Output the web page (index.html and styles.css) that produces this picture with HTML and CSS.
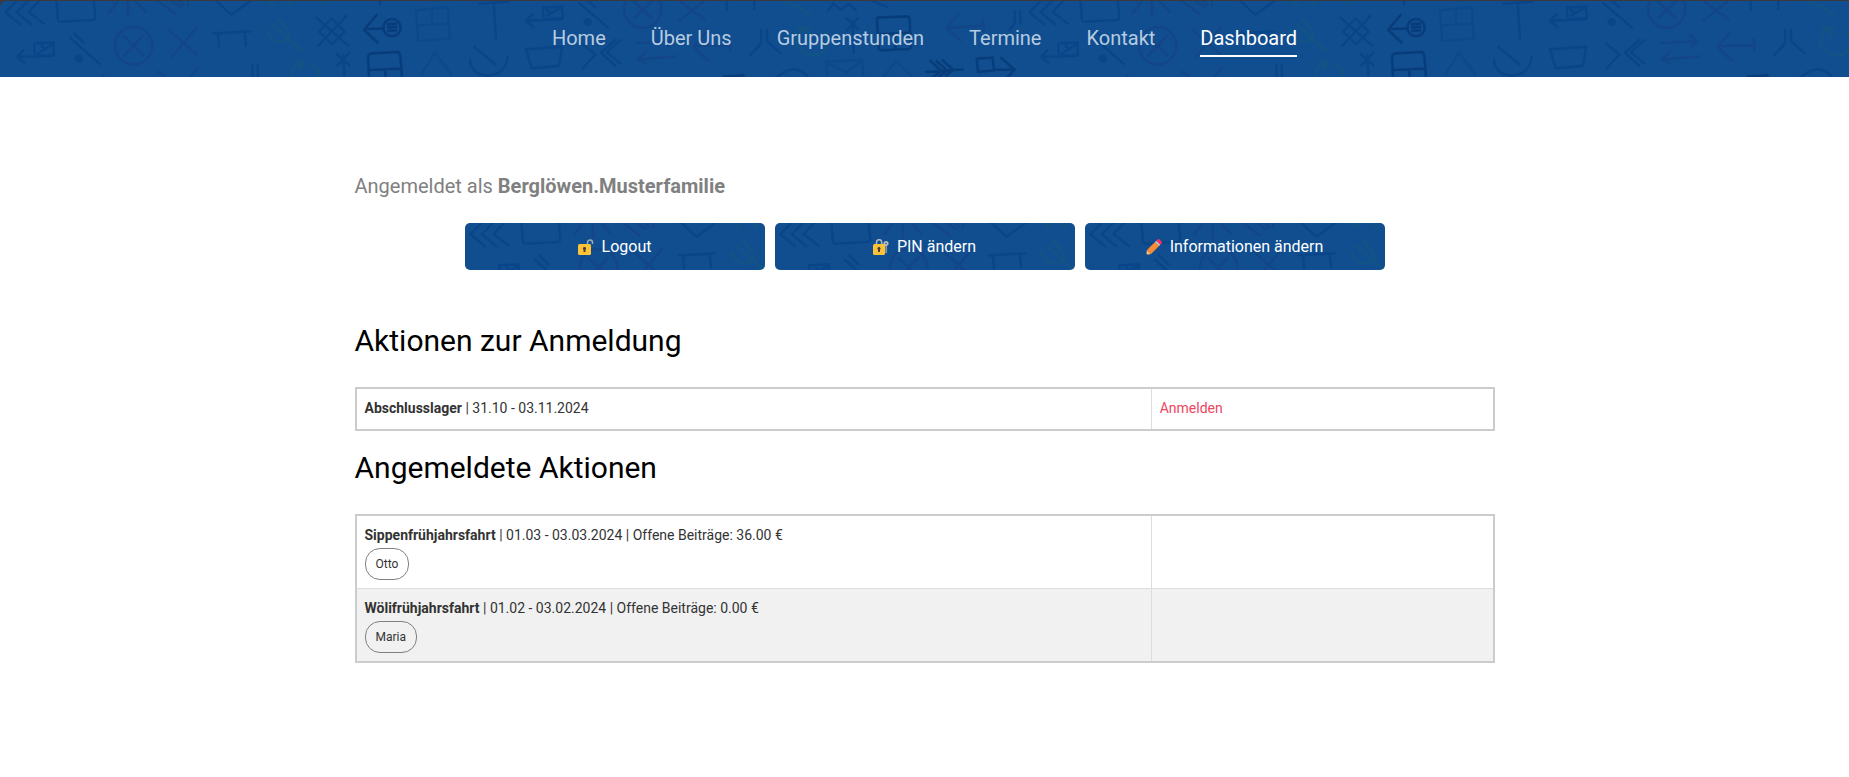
FILE: index.html
```html
<!DOCTYPE html>
<html lang="de">
<head>
<meta charset="utf-8">
<meta name="viewport" content="width=device-width, initial-scale=1">
<title>Dashboard</title>
<link rel="stylesheet" href="styles.css">
</head>
<body>
<div class="top">
<header class="site-header">
  <svg class="pattern" aria-hidden="true">
    <defs>
      <!-- Repeating tile of scout trail signs -->
      <pattern id="signs" width="1024" height="76" patternUnits="userSpaceOnUse" viewBox="0 3 3072 228">
        <g fill="none" stroke="#053f83" stroke-width="8" stroke-linecap="round" stroke-linejoin="round" opacity=".6">
          <path d="M52 0 16 37 60 73M87 0 50 37 94 73M120 0 86 36 131 71"/>
          <path d="M169 0 174 58Q175 65 184 65L278 60Q286 58 286 50L281 0"/>
          <path d="M356 0 328 37M383 0 384 48M404 0 438 35M470 0 524 40M510 0 541 20M536 0 552 15M563 0 565 16" stroke="#134082"/>
          <path d="M646 0 694 44 756 0"/>
          <path d="M158 168 52 170M70 151 52 170 72 188M103 130 161 127 161 165 104 168ZM104 168 161 130M124 138 138 148"/>
          <path d="M210 113 299 192M222 100 250 127"/>
          <circle cx="237" cy="175" r="9" fill="#053f83"/>
          <g stroke="#134082"><circle cx="401" cy="137" r="56"/><path d="M371 109 430 165M429 108 374 165M504 87 591 165M590 83 515 171"/></g>
          <path d="M641 100 751 94M654 101 657 139M734 96 738 137"/>
          <g stroke="#11567c"><path d="M800 91Q820 132 850 124 875 104 862 88L835 57M816 73 905 151M805 0 820 15M860 0 876 16M955 0 970 8"/></g>
          <path d="M995 55 1034 95 997 134 957 94ZM1040 47 955 137M950 54 1045 137"/>
          <g stroke="#03316d"><path d="M1130 45 1092 89 1133 128M1094 87 1150 86"/><circle cx="1176" cy="83" r="26"/><path d="M1163 73 1188 71M1164 82 1189 81M1165 92 1188 91"/><path d="M1107 232 1104 174Q1104 160 1116 160L1190 156Q1200 156 1201 168L1206 232M1106 210 1202 206M1155 210 1157 232"/></g>
          <path d="M1248 30 1343 22 1349 116 1254 123ZM1251 77 1346 70M1295 27 1297 65" opacity=".6"/>
          <path d="M1438 11 1525 5M1481 10 1488 116M1141 0 1141 14"/>
          <path d="M1423 141 1485 193M1410 180C1413 246 1520 240 1522 172"/>
          <path d="M1010 162 1048 196M1048 158 1012 197M1030 166 1033 232"/>
          <path d="M1264 224 1304 157 1354 224" opacity=".6"/>
          <path d="M757 197 758 232M773 197 774 232"/>
          <path d="M310 225 308 232M474 215 493 232M590 207 568 232" stroke="#134082"/>
          <path d="M889 180 912 185 899 210M910 190Q873 192 872 232M932 195Q953 201 957 232" stroke="#11567c"/>

          <path d="M1686 58 1580 62M1598 43 1578 62 1600 80M1629 23 1687 19 1688 54 1631 58ZM1642 46 1686 21M1640 29 1653 40"/>
          <path d="M1737 9 1823 82M1764 3 1784 20"/>
          <circle cx="1763" cy="66" r="9" fill="#053f83"/>
          <g stroke="#134082"><circle cx="1928" cy="28" r="56"/><path d="M1897 0 1954 54M1956 3 1903 54M2040 5 2115 58M2110 5 2037 63"/></g>
          <path d="M2180 0 2181 30M2262 0 2263 26"/>
          <path d="M2350 0 2430 43" stroke="#11567c"/>
          <path d="M2483 33 2500 10 2523 30 2546 10 2568 32"/>
          <path d="M2610 0 2660 20"/>
          <path d="M1578 148 1686 140 1678 197 1595 205ZM1745 130 1786 164 1748 205M1846 120 1803 158 1846 198M1862 120 1820 157 1861 190"/>
          <g stroke="#134082"><path d="M1912 129 2020 123M1998 106 2022 123 2003 139M2028 169 1914 178M1936 157 1914 178 1938 190M2118 98 2080 140 2122 180M2080 138 2190 136M2189 117 2192 150"/></g>
          <path d="M2283 90 2284 129 2250 166M2300 90 2302 125 2342 160"/>
          <path d="M2395 82 2428 86 2418 110M2420 86C2370 100 2385 165 2436 165 2483 165 2498 120 2463 92" stroke="#11567c"/>
          <path d="M2541 56 2575 88M2575 53 2540 91M2557 64 2561 160"/>
          <g stroke="#03316d"><path d="M2632 53 2720 49Q2728 49 2729 58L2733 138Q2734 146 2724 147L2645 151Q2637 151 2636 143L2631 60ZM2634 103 2730 98M2683 101 2686 148"/></g>
          <path d="M2478 186 2586 179 2590 232M2478 186 2482 232M2480 188 2540 217 2586 181M2650 230 2688 185 2735 227" opacity=".6"/>
          <path d="M2330 232Q2385 184 2425 232"/>
          <path d="M2172 230 2220 227M2226 224 2234 232" stroke="#03316d"/>
          <path d="M2878 40 2840 84 2882 122M2840 84 2950 77M2948 59 2952 93" stroke="#134082"/>
          <path d="M3045 33 3044 70 3028 90M3060 35 3062 70"/>
          <g stroke="#03316d"><path d="M2778 216 2888 208M2792 183 2824 213 2798 232M2810 183 2842 212 2817 230M2828 181 2860 209 2838 227M2930 176 2978 173 2982 211 2934 216ZM2982 208 3044 209M3004 174 3044 209 3022 232"/></g>
        </g>
      </pattern>
    </defs>
    <rect width="100%" height="100%" fill="url(#signs)"/>
  </svg>
  <nav class="nav">
    <a class="nav-link" href="#">Home</a>
    <a class="nav-link" href="#">Über Uns</a>
    <a class="nav-link" href="#">Gruppenstunden</a>
    <a class="nav-link" href="#">Termine</a>
    <a class="nav-link" href="#">Kontakt</a>
    <a class="nav-link nav-link-active" href="#" aria-current="page">Dashboard</a>
  </nav>
</header>
</div>

<main class="content">
  <p class="signed-in">Angemeldet als <strong>Berglöwen.Musterfamilie</strong></p>

  <div class="actions">
    <button class="action" type="button">
      <svg class="pattern" aria-hidden="true"><rect width="100%" height="100%" fill="url(#signs)"/></svg>
      <svg class="icon" viewBox="0 0 16 16" aria-hidden="true">
        <path d="M9.500 6V3.500a2.500 2.500 0 0 1 5 0V5" fill="none" stroke="#9dabb5" stroke-width="1.500"/>
        <rect x="0" y="5" width="13" height="11" rx="1.500" fill="#fdc336"/>
        <path d="M6.500 8a1.500 1.500 0 0 1 1 2.700V13h-2v-2.300a1.500 1.500 0 0 1 1-2.700z" fill="#4c3a40"/>
      </svg>
      <span class="action-label">Logout</span>
    </button>
    <button class="action" type="button">
      <svg class="pattern" aria-hidden="true"><rect width="100%" height="100%" fill="url(#signs)"/></svg>
      <svg class="icon" viewBox="0 0 16 16" aria-hidden="true">
        <path d="M3.500 6V3.300a2.600 2.600 0 0 1 5.200 0V6" fill="none" stroke="#aab6bf" stroke-width="1.600"/>
        <path d="M13.200 6v8" stroke="#8496a5" stroke-width="1.800"/>
        <circle cx="13" cy="4.500" r="1.700" fill="none" stroke="#b4bfc8" stroke-width="1.800"/>
        <rect x="0" y="5" width="12" height="11" rx="1.500" fill="#fdc336"/>
        <path d="M6 8a1.500 1.500 0 0 1 1 2.700V13H5v-2.300A1.500 1.500 0 0 1 6 8z" fill="#4c3a40"/>
      </svg>
      <span class="action-label">PIN ändern</span>
    </button>
    <button class="action" type="button">
      <svg class="pattern" aria-hidden="true"><rect width="100%" height="100%" fill="url(#signs)"/></svg>
      <svg class="icon" viewBox="0 0 16 16" aria-hidden="true">
        <path d="M0 16 1 11 5 15z" fill="#f2c07e"/>
        <path d="M1 11 9 3l4 4-8 8z" fill="#fb8b32"/>
        <path d="M9 3l1.300-1.300 4 4L13 7z" fill="#c9cdd6"/>
        <path d="M10.300 1.700 11.500.5q1-.8 2 0l2 2q.8 1 0 2l-1.200 1.200z" fill="#f8315f"/>
        <path d="M0 16l.4-1.800 1.400 1.400z" fill="#333"/>
      </svg>
      <span class="action-label">Informationen ändern</span>
    </button>
  </div>

  <section class="section">
    <h2 class="section-title">Aktionen zur Anmeldung</h2>
    <table class="events">
      <tbody>
        <tr>
          <td class="event"><strong>Abschlusslager</strong> | 31.10 - 03.11.2024</td>
          <td><a class="register" href="#">Anmelden</a></td>
        </tr>
      </tbody>
    </table>
  </section>

  <section class="section">
    <h2 class="section-title">Angemeldete Aktionen</h2>
    <table class="events">
      <tbody>
        <tr>
          <td class="event"><strong>Sippenfrühjahrsfahrt</strong> | 01.03 - 03.03.2024 | Offene Beiträge: 36.00 €
            <div class="people"><span class="person">Otto</span></div></td>
          <td></td>
        </tr>
        <tr>
          <td class="event"><strong>Wölifrühjahrsfahrt</strong> | 01.02 - 03.02.2024 | Offene Beiträge: 0.00 €
            <div class="people"><span class="person">Maria</span></div></td>
          <td></td>
        </tr>
      </tbody>
    </table>
  </section>
</main>
</body>
</html>
```
FILE: styles.css
```css
* {
  box-sizing: border-box;
}

body {
  margin: 0;
  background: #fff;
  color: #333;
  font-family: Roboto, "Liberation Sans", sans-serif;
}

.top {
  padding-top: 1px;
  background: #3a3a3c;
}

.site-header {
  position: relative;
  border-top-left-radius: 6px;
  background: #104e90;
  overflow: hidden;
}

.pattern {
  position: absolute;
  inset: 0;
  width: 100%;
  height: 100%;
  pointer-events: none;
}

.nav {
  position: relative;
  display: flex;
  flex-wrap: wrap;
  justify-content: center;
  gap: 0 45px;
  padding: 20px 16px;
}

.nav-link {
  padding: 4px 0;
  border-bottom: 2px solid transparent;
  color: #b7cbe0;
  font-size: 20px;
  line-height: 26px;
  text-decoration: none;
}

.nav-link-active {
  border-bottom-color: #fff;
  color: #fff;
}

.content {
  max-width: 1172px;
  margin: 0 auto;
  padding: 97px 16px 64px;
}

.signed-in {
  margin: 0 0 25px;
  color: #808080;
  font-size: 20px;
  font-weight: 400;
  line-height: 24px;
}

.signed-in strong {
  font-weight: 700;
}

.actions {
  display: flex;
  flex-wrap: wrap;
  justify-content: center;
  gap: 10px;
  margin-bottom: 51px;
}

.action {
  position: relative;
  display: flex;
  flex: 0 1 300px;
  align-items: center;
  justify-content: center;
  gap: 8px;
  padding: 12px;
  border: 0;
  border-radius: 5px;
  background: #104e90;
  color: #fff;
  font: 400 16px/23px Roboto, "Liberation Sans", sans-serif;
  overflow: hidden;
  cursor: pointer;
}

.icon,
.action-label {
  position: relative;
}

.icon {
  width: 16px;
  height: 16px;
}

.section {
  margin-bottom: 17px;
}

.section-title {
  margin: 0 0 26px;
  color: #000;
  font-size: 30px;
  font-weight: 400;
  line-height: 40px;
}

.events {
  width: 100%;
  border: 2px solid #ccc;
  border-collapse: separate;
  border-spacing: 0;
  font-size: 14px;
  line-height: 22px;
}

.events td {
  height: 40px;
  padding: 8px;
  vertical-align: top;
}

.events tr + tr td {
  border-top: 1px solid #ddd;
}

.events tr:nth-child(even) {
  background: #f1f1f1;
}

.events .event {
  width: 70%;
  border-right: 1px solid #ddd;
}

.people {
  display: flex;
  flex-wrap: wrap;
  gap: 4px;
  margin-top: 2px;
}

.person {
  padding: 0 10px;
  border: 1px solid #808080;
  border-radius: 15px;
  font-size: 12px;
  line-height: 30px;
}

.register {
  color: #ec4561;
  text-decoration: none;
}
```
